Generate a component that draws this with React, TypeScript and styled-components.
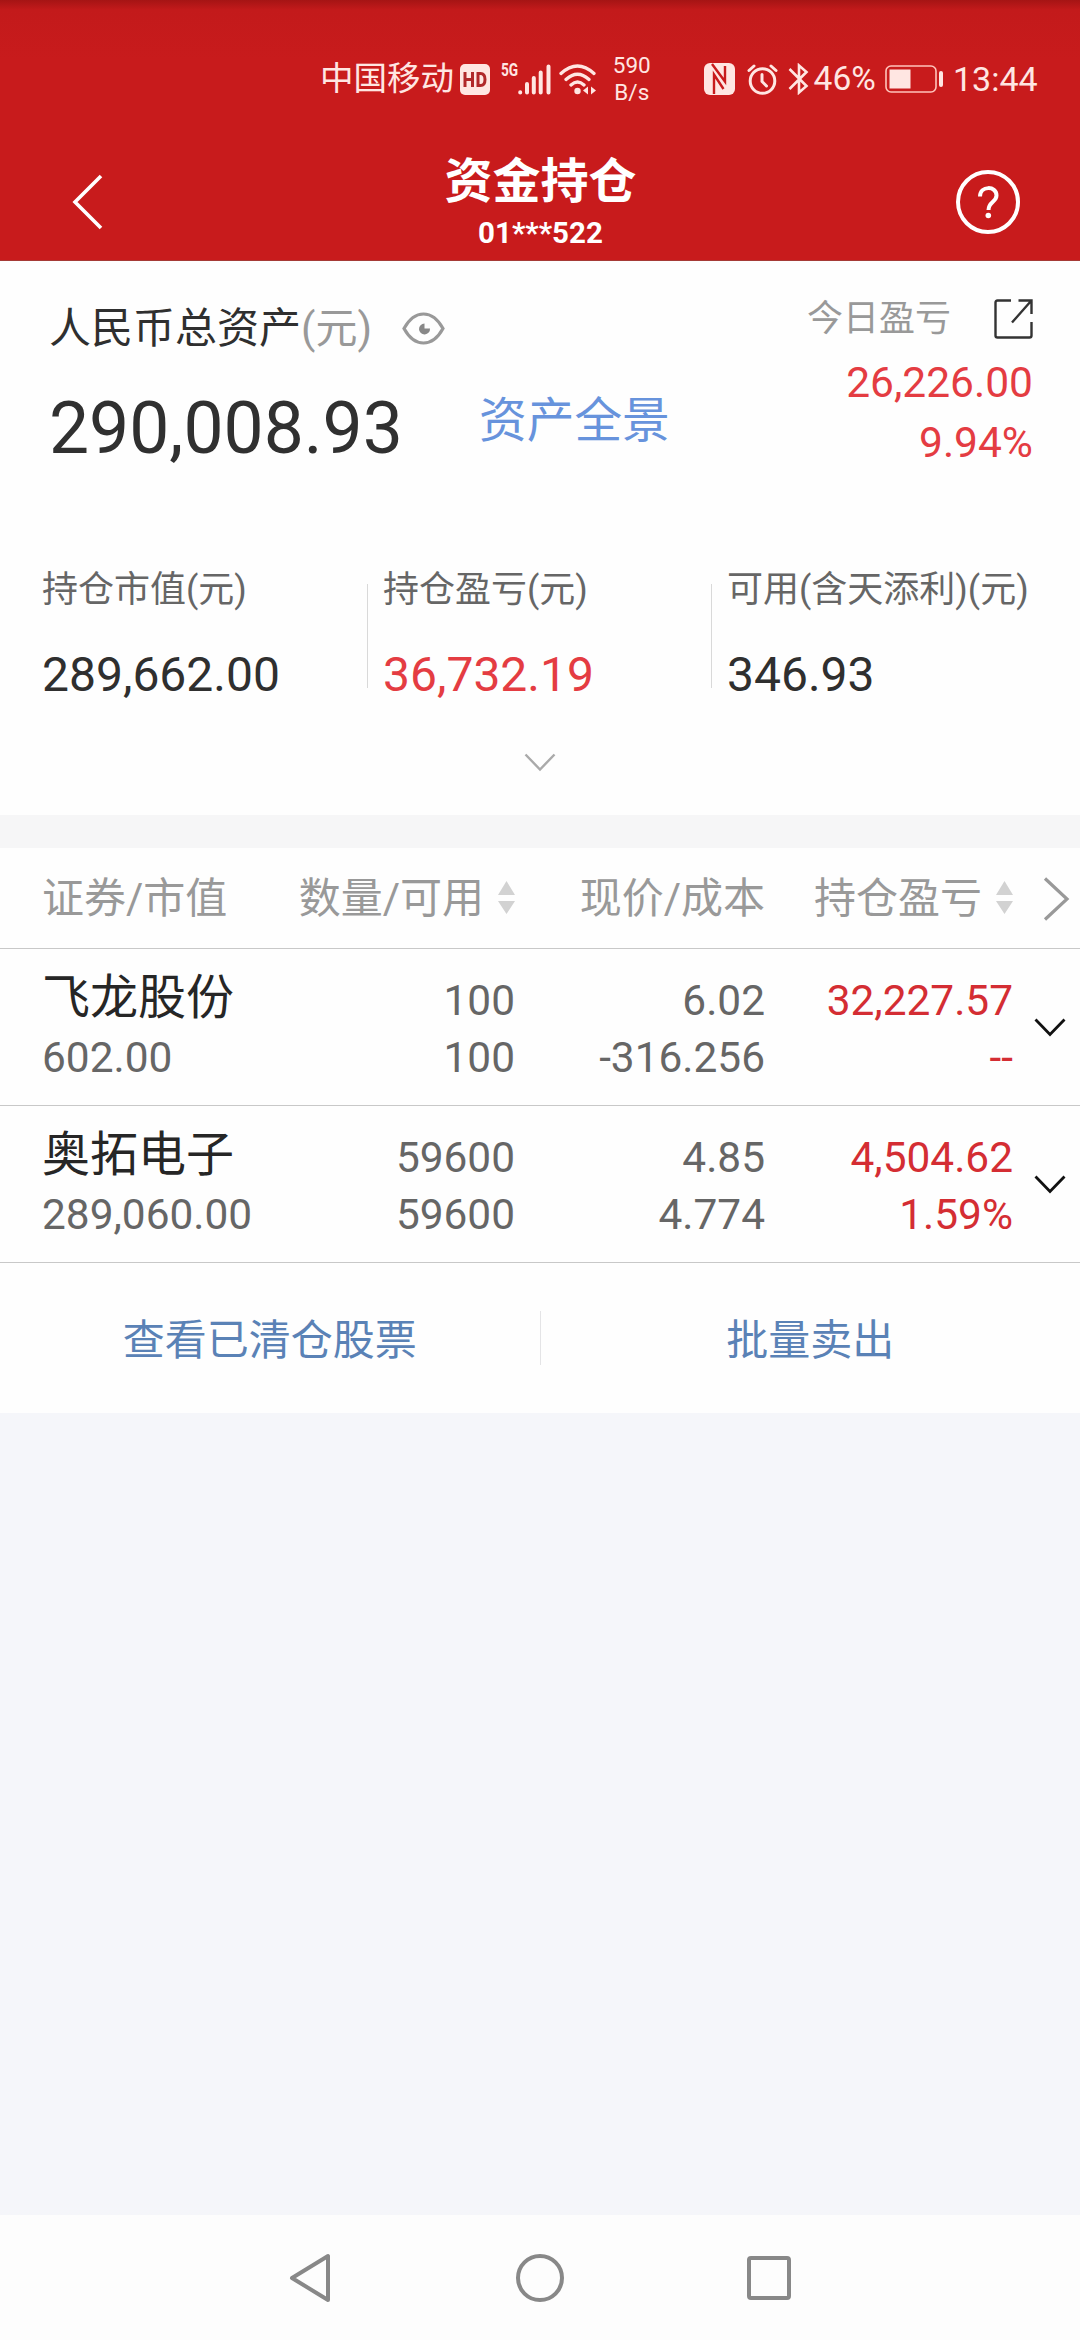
import React from "react";
import styled, { createGlobalStyle } from "styled-components";

const GlobalStyle = createGlobalStyle`
  * { box-sizing: border-box; }
  body {
    margin: 0;
    background: #f5f6fa;
    font-family: Roboto, "Noto Sans CJK SC", sans-serif;
    -webkit-font-smoothing: antialiased;
  }
  svg { display: block; flex: none; }
`;

const colors = {
  brand: "#c81b1c",
  red: "#e43c42",
  rowRed: "#d42d33",
  ink: "#2f2f2f",
  gray: "#666666",
  light: "#999999",
  link: "#6793dc",
  action: "#5a82b6",
  line: "#c8c8c8",
};

const Screen = styled.div`
  width: 1080px;
  height: 2340px;
  display: flex;
  flex-direction: column;
  background: #f5f6fa;
`;

const TopArea = styled.header`
  height: 261px;
  background: linear-gradient(#a51414 0, #c31a1b 10px, ${colors.brand} 60px);
  color: #fff;
  border-bottom: 1px solid #a53a36;
`;

const StatusBar = styled.div`
  height: 140px;
  padding: 18px 43px 0 320px;
  display: flex;
  align-items: center;
  color: #ffe6e2;
`;

const StatusText = styled.span<{ $w: number; $size?: number; $ml?: number }>`
  width: ${(p) => p.$w}px;
  margin-left: ${(p) => p.$ml ?? 0}px;
  font-size: ${(p) => p.$size ?? 33.5}px;
  line-height: 40px;
  white-space: nowrap;
`;

const StatusIcon = styled.span<{ $ml: number }>`
  margin-left: ${(p) => p.$ml}px;
`;

const Badge5G = styled.span`
  width: 17px;
  margin-left: 11px;
  padding-bottom: 18px;
  font: 700 18.5px/16px Roboto, sans-serif;
  transform: scaleX(0.74);
  transform-origin: left center;
`;

const NetSpeed = styled.span`
  width: 44px;
  margin-left: 13px;
  text-align: center;
  font-size: 22.5px;
  line-height: 27px;
`;

const TitleBar = styled.div`
  height: 120px;
  padding: 0 59px 0 72px;
  display: flex;
  justify-content: space-between;
`;

const IconButton = styled.button<{ $top: number; $w: number }>`
  width: ${(p) => p.$w}px;
  margin: 0;
  padding: ${(p) => p.$top}px 0 0;
  border: 0;
  background: none;
  align-self: flex-start;
`;

const TitleBlock = styled.div`
  display: flex;
  flex-direction: column;
  align-items: center;
  padding: 12px 0 0 22px;
`;

const Title = styled.h1`
  margin: 0;
  font-size: 48px;
  line-height: 60px;
  font-weight: 700;
`;

const Account = styled.div`
  font-size: 29.5px;
  line-height: 40px;
  margin-top: 1px;
  font-weight: 700;
`;

const Panel = styled.section`
  background: #fefefe;
`;

const Overview = styled.div`
  height: 304px;
  display: flex;
  justify-content: space-between;
  padding: 37px 47px 0 49px;
`;

const AssetTitle = styled.div`
  display: flex;
  align-items: center;
  height: 60px;
  margin-top: 1px;
  font-size: 42px;
  line-height: 60px;
  color: ${colors.ink};
`;

const Unit = styled.span`
  color: ${colors.light};
  margin-right: 30px;
`;

const AssetRow = styled.div`
  display: flex;
  align-items: center;
  height: 84px;
  margin-top: 28px;
`;

const Amount = styled.div`
  width: 430px;
  font-size: 71.4px;
  line-height: 84px;
  color: #303030;
`;

const PanoramaLink = styled.a`
  font-size: 47.7px;
  line-height: 60px;
  margin-bottom: 16px;
  color: ${colors.link};
`;

const Today = styled.div`
  display: flex;
  flex-direction: column;
  align-items: flex-end;
`;

const TodayTitle = styled.div`
  display: flex;
  align-items: center;
  gap: 43px;
  height: 42px;
  margin-bottom: 13px;
  font-size: 36px;
  line-height: 42px;
  color: ${colors.light};
`;

const TodayValue = styled.div`
  font-size: 42.5px;
  line-height: 60px;
  color: ${colors.red};
`;

const Summary = styled.div`
  display: grid;
  grid-template-columns: 368px 344px 368px;
  height: 139px;
`;

const SummaryCell = styled.div<{ $pad: number }>`
  display: flex;
  justify-content: space-between;
  padding-left: ${(p) => p.$pad}px;
`;

const SummaryLabel = styled.div`
  font-size: 36px;
  line-height: 50px;
  color: ${colors.gray};
  white-space: nowrap;
`;

const SummaryValue = styled.div<{ $red?: boolean }>`
  margin-top: 30px;
  font-size: 48px;
  line-height: 60px;
  color: ${(p) => (p.$red ? colors.red : colors.ink)};
`;

const CellRule = styled.i`
  width: 1px;
  height: 104px;
  margin-top: 19px;
  background: #d9d9d9;
`;

const Expander = styled.div`
  height: 111px;
  padding-top: 49px;
  display: flex;
  justify-content: center;
`;

const Gap = styled.div`
  height: 33px;
  background: #f6f6f7;
`;

const gridColumns = "301px 214px 250px 248px 1fr";

const TableHead = styled.div`
  display: grid;
  grid-template-columns: ${gridColumns};
  height: 101px;
  align-items: center;
  padding-top: 2px;
  font-size: 42px;
  color: ${colors.light};
  border-bottom: 1px solid ${colors.line};
`;

const HeadCell = styled.div<{ $left?: boolean }>`
  display: flex;
  align-items: center;
  justify-content: ${(p) => (p.$left ? "flex-start" : "flex-end")};
  gap: 14px;
  padding-left: ${(p) => (p.$left ? 42 : 0)}px;
  line-height: 60px;
  white-space: nowrap;
`;

const SortMark = styled.span`
  margin-top: -4px;
`;

const Position = styled.div`
  display: grid;
  grid-template-columns: ${gridColumns};
  height: 157px;
  padding-top: 22px;
  border-bottom: 1px solid ${colors.line};
`;

const PosCell = styled.div<{ $left?: boolean; $red?: boolean }>`
  text-align: ${(p) => (p.$left ? "left" : "right")};
  padding-left: ${(p) => (p.$left ? 42 : 0)}px;
  font-size: 42.4px;
  line-height: 57px;
  padding-top: 1px;
  white-space: nowrap;
  color: ${(p) => (p.$red ? colors.rowRed : colors.gray)};
`;

const StockName = styled.div`
  font-size: 48px;
  color: #262626;
  line-height: 57px;
  margin: -3px 0 3px;
`;

const CellIcon = styled.div<{ $top?: number; $pl: number }>`
  padding: ${(p) => p.$top ?? 0}px 0 0 ${(p) => p.$pl}px;
`;

const Actions = styled.div`
  display: flex;
  align-items: center;
  height: 150px;
`;

const Action = styled.a`
  flex: 1;
  text-align: center;
  font-size: 42px;
  line-height: 60px;
  padding-top: 5px;
  color: ${colors.action};
`;

const ActionRule = styled.i`
  width: 1px;
  height: 54px;
  background: #e4e4e6;
`;

const Blank = styled.div`
  flex: 1;
  background: #f5f6fa;
`;

const NavBar = styled.nav`
  height: 125px;
  display: flex;
  align-items: center;
  justify-content: center;
  gap: 179px;
  background: #fdfdfd;
`;

const SortIcon = () => (
  <SortMark>
    <svg width="17" height="33" viewBox="0 0 17 33" fill="#d2d2d2">
      <path d="M8.500 0L17 14H0zM8.500 33L17 20H0z" />
    </svg>
  </SortMark>
);

const DownIcon = ({ color, width }: { color: string; width: number }) => (
  <svg width="32" height="20" viewBox="0 0 32 20" fill="none" stroke={color} strokeWidth={width}>
    <path d="M1.500 1.500L16 16.500 30.500 1.500" />
  </svg>
);

const HdIcon = () => (
  <svg width="30" height="31" viewBox="0 0 30 31">
    <rect width="30" height="31" rx="5" fill="#ffe6e2" />
    <path
      d="M5 8v15M12.500 8v15M5 15.500h7.500M18 9.500v12h2.500q4.500 0 4.500-6t-4.500-6z"
      fill="none"
      stroke="#b0282a"
      strokeWidth="3"
    />
  </svg>
);

const SignalIcon = () => (
  <svg width="33" height="31" viewBox="0 0 33 31" stroke="#ffe6e2" strokeWidth="4" strokeLinecap="round">
    <path d="M2.200 28.300v.2M9 20v8.500M15.800 14v14.500M22.700 8.500v20M30.500 2.500v26" />
  </svg>
);

const WifiIcon = () => (
  <svg width="38" height="31" viewBox="0 0 38 31" fill="none" stroke="#ffe6e2" strokeWidth="3.300" strokeLinecap="round">
    <path d="M2 9.500Q18.500-5.500 35 9.500M7 15.500Q18.500 5 30 15.500M12 21Q18.500 15 25 21" />
    <circle cx="18.500" cy="27" r="3.200" fill="#ffe6e2" stroke="none" />
    <path d="M24 26.500l5-4v8zM37 26.500l-5-4v8z" fill="#ffe6e2" stroke="none" />
  </svg>
);

const NfcIcon = () => (
  <svg width="31" height="32" viewBox="0 0 31 32">
    <rect width="31" height="32" rx="6" fill="#ffe6e2" />
    <path
      d="M10 31V11.500L19.500 26M8 1L21 18.500V3"
      fill="none"
      stroke={colors.brand}
      strokeWidth="2.400"
    />
  </svg>
);

const AlarmIcon = () => (
  <svg width="31" height="31" viewBox="0 0 31 31" fill="none" stroke="#ffe6e2" strokeWidth="3" strokeLinecap="round">
    <circle cx="15.500" cy="17" r="12.300" />
    <path d="M15 10.500v7l4.500 4.500M2 6.500L7 2M29 6.500L24 2" />
  </svg>
);

const BluetoothIcon = () => (
  <svg width="21" height="32" viewBox="0 0 21 32" fill="none" stroke="#ffe6e2" strokeWidth="2.600">
    <path d="M1.500 6L18.500 23 11 29.500V2.500L18.500 9 1.500 26" />
  </svg>
);

const BatteryIcon = () => (
  <svg width="59" height="28" viewBox="0 0 59 28">
    <rect x="1" y="1" width="50" height="26" rx="5" fill="none" stroke="#ffc4bb" strokeWidth="1.600" />
    <rect x="4.500" y="4.500" width="21" height="19" fill="#ffe6e2" />
    <rect x="54" y="6" width="4" height="16" rx="2" fill="#ffe6e2" />
  </svg>
);

const positions = [
  { name: "飞龙股份", value: "602.00", qty: "100", avail: "100", price: "6.02", cost: "-316.256", pl: "32,227.57", rate: "--" },
  { name: "奥拓电子", value: "289,060.00", qty: "59600", avail: "59600", price: "4.85", cost: "4.774", pl: "4,504.62", rate: "1.59%" },
];

export default function App() {
  return (
    <Screen>
      <GlobalStyle />
      <TopArea>
        <StatusBar>
          <StatusText $w={134}>中国移动</StatusText>
          <StatusIcon $ml={6}><HdIcon /></StatusIcon>
          <Badge5G>5G</Badge5G>
          <StatusIcon $ml={0}><SignalIcon /></StatusIcon>
          <StatusIcon $ml={8}><WifiIcon /></StatusIcon>
          <NetSpeed>590<br />B/s</NetSpeed>
          <StatusIcon $ml={50}><NfcIcon /></StatusIcon>
          <StatusIcon $ml={12}><AlarmIcon /></StatusIcon>
          <StatusIcon $ml={10}><BluetoothIcon /></StatusIcon>
          <StatusText $ml={5} $w={64}>46%</StatusText>
          <StatusIcon $ml={8}><BatteryIcon /></StatusIcon>
          <StatusText $ml={9} $w={84} $size={34}>13:44</StatusText>
        </StatusBar>
        <TitleBar>
          <IconButton $top={34} $w={32} aria-label="返回">
            <svg width="32" height="56" viewBox="0 0 32 56" fill="none" stroke="#fff" strokeWidth="3.600">
              <path d="M29 2L3 28l26 26" />
            </svg>
          </IconButton>
          <TitleBlock>
            <Title>资金持仓</Title>
            <Account>01***522</Account>
          </TitleBlock>
          <IconButton $top={30} $w={66} aria-label="帮助">
            <svg width="66" height="66" viewBox="0 0 66 66" fill="none" stroke="#fff" strokeWidth="4">
              <circle cx="33" cy="32" r="30" />
              <path d="M25 26.500C25 15.500 41.500 15.500 41.500 25.500C41.500 32 33.500 31.500 33.500 40" />
              <circle cx="33.300" cy="45.500" r="2.800" fill="#fff" stroke="none" />
            </svg>
          </IconButton>
        </TitleBar>
      </TopArea>

      <Panel>
        <Overview>
          <div>
            <AssetTitle>
              人民币总资产<Unit>(元)</Unit>
              <svg width="43" height="34" viewBox="0 0 43 34" fill="none" stroke="#999" strokeWidth="3.200">
                <path d="M2 16.500Q10 2 21.500 2T41 16.500Q33 31 21.500 31T2 16.500z" />
                <path d="M22.500 11.500v5h5.500a5.500 5.500 0 1 1-5.500-5z" fill="#888" stroke="none" />
              </svg>
            </AssetTitle>
            <AssetRow>
              <Amount>290,008.93</Amount>
              <PanoramaLink>资产全景</PanoramaLink>
            </AssetRow>
          </div>
          <Today>
            <TodayTitle>
              今日盈亏
              <svg width="39" height="40" viewBox="0 0 39 40" fill="none" stroke="#333" strokeWidth="2.400">
                <path d="M17 1.500H3.500Q1.500 1.500 1.500 3.500V36.500Q1.500 38.500 3.500 38.500H35.500Q37.500 38.500 37.500 36.500V23M24.500 1.500H37.500V15M37 2L18 23.500" />
              </svg>
            </TodayTitle>
            <TodayValue>26,226.00</TodayValue>
            <TodayValue>9.94%</TodayValue>
          </Today>
        </Overview>
        <Summary>
          <SummaryCell $pad={42}>
            <div>
              <SummaryLabel>持仓市值(元)</SummaryLabel>
              <SummaryValue>289,662.00</SummaryValue>
            </div>
            <CellRule />
          </SummaryCell>
          <SummaryCell $pad={15}>
            <div>
              <SummaryLabel>持仓盈亏(元)</SummaryLabel>
              <SummaryValue $red>36,732.19</SummaryValue>
            </div>
            <CellRule />
          </SummaryCell>
          <SummaryCell $pad={15}>
            <div>
              <SummaryLabel>可用(含天添利)(元)</SummaryLabel>
              <SummaryValue>346.93</SummaryValue>
            </div>
          </SummaryCell>
        </Summary>
        <Expander>
          <DownIcon color="#aaa" width={2.4} />
        </Expander>
      </Panel>

      <Gap />

      <Panel>
        <TableHead>
          <HeadCell $left>证券/市值</HeadCell>
          <HeadCell>数量/可用 <SortIcon /></HeadCell>
          <HeadCell>现价/成本</HeadCell>
          <HeadCell>持仓盈亏 <SortIcon /></HeadCell>
          <CellIcon $pl={30}>
            <svg width="27" height="44" viewBox="0 0 27 44" fill="none" stroke="#999" strokeWidth="3.200">
              <path d="M2 1.500L24 22 2 42.500" />
            </svg>
          </CellIcon>
        </TableHead>
        {positions.map((p) => (
          <Position key={p.name}>
            <PosCell $left>
              <StockName>{p.name}</StockName>
              {p.value}
            </PosCell>
            <PosCell>{p.qty}<br />{p.avail}</PosCell>
            <PosCell>{p.price}<br />{p.cost}</PosCell>
            <PosCell $red>{p.pl}<br />{p.rate}</PosCell>
            <CellIcon $top={47} $pl={21}>
              <DownIcon color="#111" width={2.8} />
            </CellIcon>
          </Position>
        ))}
        <Actions>
          <Action>查看已清仓股票</Action>
          <ActionRule />
          <Action>批量卖出</Action>
        </Actions>
      </Panel>

      <Blank />

      <NavBar>
        <svg width="48" height="52" viewBox="0 0 48 52" fill="none" stroke="#888" strokeWidth="4" strokeLinejoin="round">
          <path d="M41 4V48L5 26z" />
        </svg>
        <svg width="52" height="52" viewBox="0 0 52 52" fill="none" stroke="#888" strokeWidth="4">
          <circle cx="26" cy="26" r="22" />
        </svg>
        <svg width="48" height="48" viewBox="0 0 48 48" fill="none" stroke="#888" strokeWidth="4">
          <rect x="4" y="4" width="40" height="40" rx="2" />
        </svg>
      </NavBar>
    </Screen>
  );
}
